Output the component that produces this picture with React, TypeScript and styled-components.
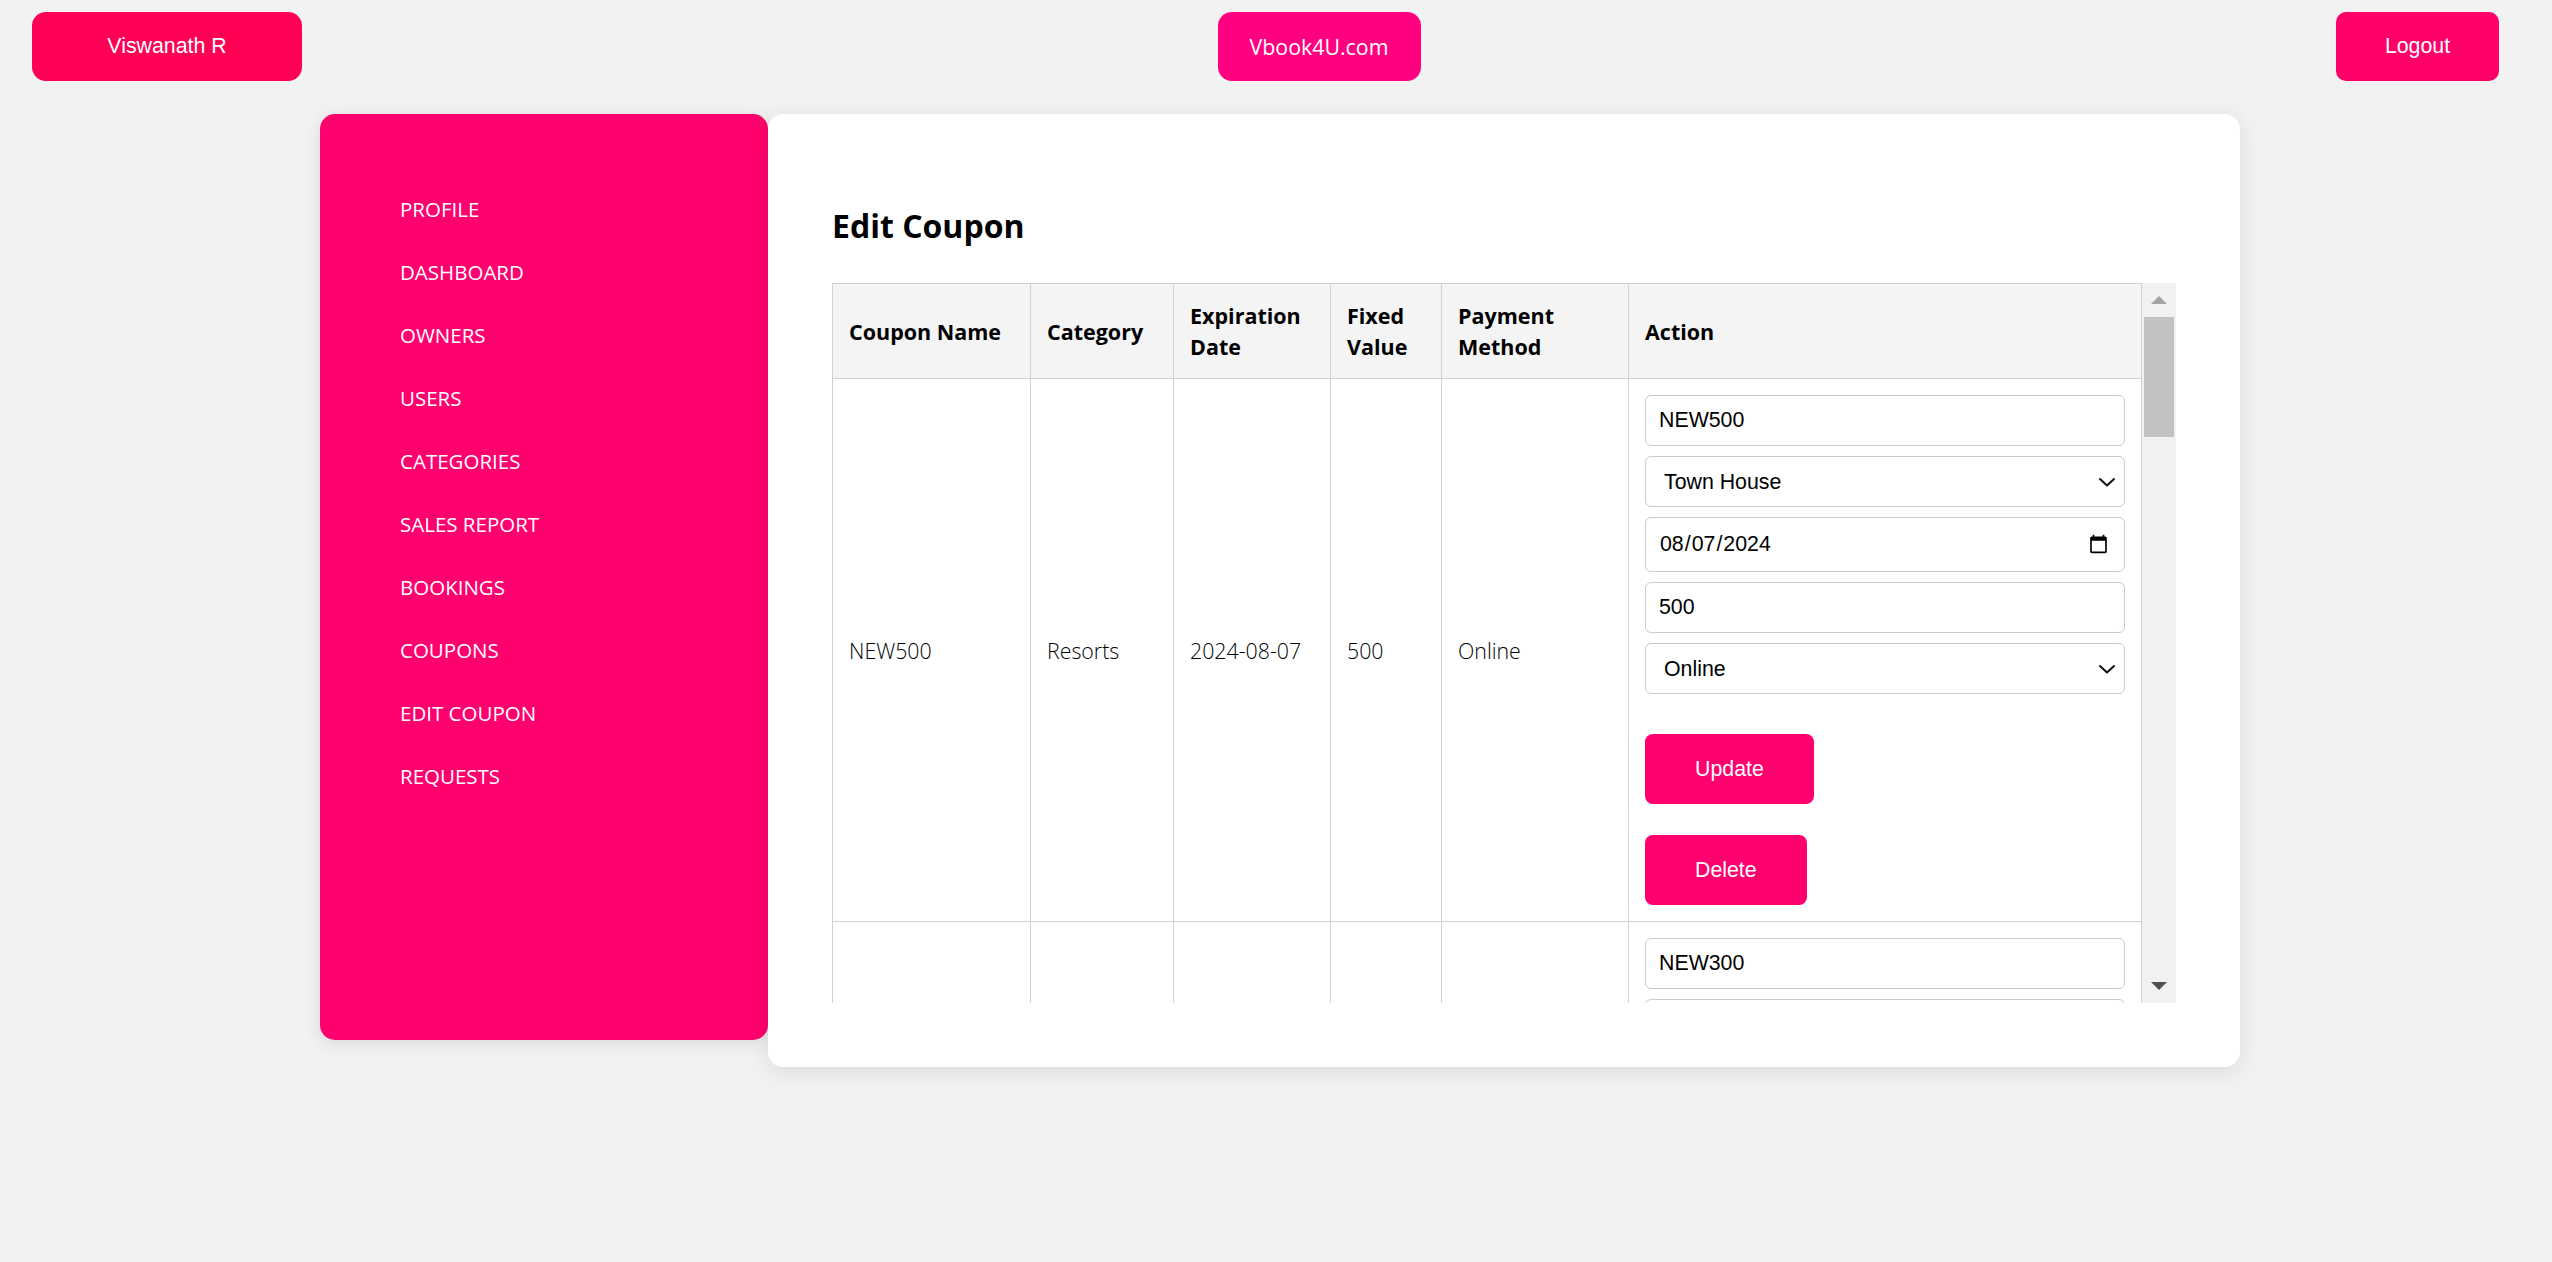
import React from 'react';
import styled, { createGlobalStyle } from 'styled-components';

const GlobalStyle = createGlobalStyle`
  html, body { margin: 0; padding: 0; background: #f2f2f2; }
  body { font-family: "Open Sans", "Liberation Sans", sans-serif; }
  * { box-sizing: border-box; }
`;

const Page = styled.div`
  min-height: 1262px;
  background: #f2f2f2;
`;

const TopBar = styled.header`
  display: flex;
  justify-content: space-between;
  align-items: flex-start;
  padding: 12px 53px 0 32px;
`;

const TopButton = styled.button<{ $bg: string; $w: number; $radius: number; $brand?: boolean }>`
  width: ${(p) => p.$w}px;
  height: 69px;
  border: none;
  border-radius: ${(p) => p.$radius}px;
  background: ${(p) => p.$bg};
  color: #fff;
  font-family: ${(p) => (p.$brand ? '"Open Sans", sans-serif' : '"Liberation Sans", Arial, sans-serif')};
  font-size: 21.33px;
  padding: 0;
  cursor: pointer;
`;

const Main = styled.main`
  display: flex;
  justify-content: center;
  align-items: flex-start;
  padding: 33px 0 0 8px;
`;

const Sidebar = styled.nav`
  width: 448px;
  height: 926px;
  background: #ff006e;
  border-radius: 15px;
  box-shadow: 0 4px 18px rgba(0, 0, 0, 0.1);
  padding: 80px 0 0 80px;
  display: flex;
  flex-direction: column;
  gap: 33px;
`;

const NavItem = styled.a`
  display: block;
  color: #fff;
  font-size: 20.5px;
  font-weight: 400;
  line-height: 30px;
  text-decoration: none;
  text-transform: uppercase;
`;

const Card = styled.section`
  width: 1472px;
  background: #fff;
  border-radius: 15px;
  box-shadow: 0 4px 22px rgba(0, 0, 0, 0.1);
  padding: 64px;
`;

const Title = styled.h2`
  margin: 26px 0 35px;
  font-size: 32px;
  line-height: 44px;
  font-weight: 700;
  color: #000;
`;

const TableFrame = styled.div`
  display: flex;
  height: 720px;
`;

const TableScroll = styled.div`
  flex: 1;
  min-width: 0;
  overflow-y: auto;
  scrollbar-width: none;
  &::-webkit-scrollbar {
    display: none;
  }
`;

const ScrollTrack = styled.div`
  width: 34px;
  flex: none;
  background: #f1f1f1;
  display: flex;
  flex-direction: column;
`;

const ScrollArrow = styled.div`
  height: 34px;
  flex: none;
  display: flex;
  align-items: center;
  justify-content: center;
`;

const ScrollRail = styled.div`
  flex: 1;
  padding: 0 2px;
`;

const ScrollThumb = styled.div`
  height: 120px;
  background: #c1c1c1;
`;

const Table = styled.table`
  width: 100%;
  border-collapse: collapse;
  table-layout: fixed;
`;

const HeadCell = styled.th<{ $w?: number }>`
  width: ${(p) => (p.$w ? `${p.$w}px` : 'auto')};
  background: #f4f4f4;
  border: 1px solid #d2d2d2;
  padding: 16px;
  text-align: left;
  vertical-align: middle;
  font-size: 21.5px;
  font-weight: 700;
  line-height: 31px;
  color: #000;
`;

const Cell = styled.td`
  border: 1px solid #d2d2d2;
  padding: 16px;
  vertical-align: middle;
  font-size: 21.33px;
  font-weight: 300;
  line-height: 31px;
  color: #000;
`;

const ActionStack = styled.div`
  display: flex;
  flex-direction: column;
  align-items: flex-start;
`;

const fieldBase = `
  display: block;
  width: 100%;
  margin: 0 0 10px;
  border: 1px solid #cccccc;
  border-radius: 6px;
  background: #fff;
  font-family: "Liberation Sans", Arial, sans-serif;
  font-size: 21.33px;
  color: #000;
  outline: none;
`;

const Field = styled.input<{ $h?: number }>`
  ${fieldBase}
  height: ${(p) => p.$h ?? 51}px;
  padding: 0 13px;
`;

const SelectWrap = styled.div`
  position: relative;
  width: 100%;
`;

const Select = styled.select`
  ${fieldBase}
  height: 51px;
  padding: 0 40px 0 18px;
  appearance: none;
  -webkit-appearance: none;
`;

const Chevron = styled.svg`
  position: absolute;
  right: 9px;
  top: 21px;
  pointer-events: none;
`;

const ActionButton = styled.button<{ $top: number }>`
  display: block;
  margin-top: ${(p) => p.$top}px;
  height: 70px;
  padding: 0 50px;
  border: none;
  border-radius: 8px;
  background: #ff006e;
  color: #fff;
  font-family: "Liberation Sans", Arial, sans-serif;
  font-size: 21.33px;
  cursor: pointer;
`;

type Coupon = {
  name: string;
  category: string;
  selectCategory: string;
  date: string;
  value: string;
  payment: string;
};

const coupons: Coupon[] = [
  { name: 'NEW500', category: 'Resorts', selectCategory: 'Town House', date: '2024-08-07', value: '500', payment: 'Online' },
  { name: 'NEW300', category: 'Villas', selectCategory: 'Town House', date: '2024-08-15', value: '300', payment: 'Online' },
  { name: 'FEST200', category: 'Resorts', selectCategory: 'Town House', date: '2024-09-01', value: '200', payment: 'Offline' },
  { name: 'WELCOME100', category: 'Cottages', selectCategory: 'Town House', date: '2024-09-12', value: '100', payment: 'Online' },
  { name: 'SUMMER250', category: 'Town House', selectCategory: 'Town House', date: '2024-10-05', value: '250', payment: 'Online' },
  { name: 'HOLIDAY400', category: 'Resorts', selectCategory: 'Town House', date: '2024-11-20', value: '400', payment: 'Offline' },
  { name: 'STAY150', category: 'Villas', selectCategory: 'Town House', date: '2024-12-31', value: '150', payment: 'Online' },
];

const categories = ['Town House', 'Resorts', 'Villas', 'Cottages'];
const payments = ['Online', 'Offline'];

const navItems = [
  'Profile',
  'Dashboard',
  'Owners',
  'Users',
  'Categories',
  'Sales Report',
  'Bookings',
  'Coupons',
  'Edit Coupon',
  'Requests',
];

const ChevronIcon = () => (
  <Chevron width="18" height="10" viewBox="0 0 18 10">
    <polyline points="2,2 9,8.5 16,2" fill="none" stroke="#111" strokeWidth="2" strokeLinecap="round" strokeLinejoin="round" />
  </Chevron>
);

const DropDown = ({ value, options }: { value: string; options: string[] }) => (
  <SelectWrap>
    <Select defaultValue={value}>
      {options.map((o) => (
        <option key={o} value={o}>
          {o}
        </option>
      ))}
    </Select>
    <ChevronIcon />
  </SelectWrap>
);

const ScrollBar = () => (
  <ScrollTrack>
    <ScrollArrow>
      <svg width="16" height="8" viewBox="0 0 16 8">
        <polygon points="0,8 8,0 16,8" fill="#a3a3a3" />
      </svg>
    </ScrollArrow>
    <ScrollRail>
      <ScrollThumb />
    </ScrollRail>
    <ScrollArrow>
      <svg width="16" height="8" viewBox="0 0 16 8">
        <polygon points="0,0 16,0 8,8" fill="#505050" />
      </svg>
    </ScrollArrow>
  </ScrollTrack>
);

const CouponRow = ({ c }: { c: Coupon }) => (
  <tr>
    <Cell>{c.name}</Cell>
    <Cell>{c.category}</Cell>
    <Cell>{c.date}</Cell>
    <Cell>{c.value}</Cell>
    <Cell>{c.payment}</Cell>
    <Cell>
      <ActionStack>
        <Field type="text" defaultValue={c.name} />
        <DropDown value={c.selectCategory} options={categories} />
        <Field type="date" defaultValue={c.date} $h={55} />
        <Field type="number" defaultValue={c.value} />
        <DropDown value={c.payment} options={payments} />
        <ActionButton $top={30}>Update</ActionButton>
        <ActionButton $top={31}>Delete</ActionButton>
      </ActionStack>
    </Cell>
  </tr>
);

export default function App() {
  return (
    <Page>
      <GlobalStyle />
      <TopBar>
        <TopButton $bg="#ff0055" $w={270} $radius={14}>
          Viswanath R
        </TopButton>
        <TopButton $bg="#ff0080" $w={203} $radius={14} $brand>
          Vbook4U.com
        </TopButton>
        <TopButton $bg="#ff0068" $w={163} $radius={10}>
          Logout
        </TopButton>
      </TopBar>
      <Main>
        <Sidebar>
          {navItems.map((n) => (
            <NavItem key={n} href="#">
              {n}
            </NavItem>
          ))}
        </Sidebar>
        <Card>
          <Title>Edit Coupon</Title>
          <TableFrame>
            <TableScroll>
              <Table>
                <thead>
                  <tr>
                    <HeadCell $w={198}>Coupon Name</HeadCell>
                    <HeadCell $w={143}>Category</HeadCell>
                    <HeadCell $w={157}>Expiration Date</HeadCell>
                    <HeadCell $w={111}>Fixed Value</HeadCell>
                    <HeadCell $w={187}>Payment Method</HeadCell>
                    <HeadCell>Action</HeadCell>
                  </tr>
                </thead>
                <tbody>
                  {coupons.map((c) => (
                    <CouponRow key={c.name} c={c} />
                  ))}
                </tbody>
              </Table>
            </TableScroll>
            <ScrollBar />
          </TableFrame>
        </Card>
      </Main>
    </Page>
  );
}
